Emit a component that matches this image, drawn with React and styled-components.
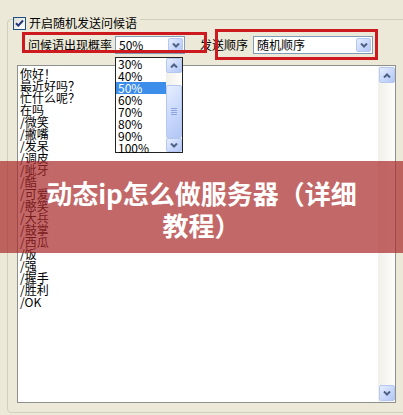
import React from 'react';
import styled, { createGlobalStyle } from 'styled-components';

const GREETINGS = [
  '你好！', '最近好吗？', '忙什么呢？', '在吗', '/微笑', '/撇嘴', '/发呆', '/调皮',
  '/呲牙', '/酷', '/可爱', '/憨笑', '/大兵', '/鼓掌', '/西瓜', '/饭', '/强', '/握手',
  '/胜利', '/OK',
];

const RATES = ['30%', '40%', '50%', '60%', '70%', '80%', '90%', '100%'];

const GlobalStyle = createGlobalStyle`
  body {
    margin: 0;
    background: #ece9d8;
    font-family: "Noto Sans CJK SC", "Noto Sans", sans-serif;
  }
`;

const Frame = styled.div`
  position: relative;
  width: 403px;
  height: 415px;
  overflow: hidden;
  box-sizing: border-box;
  padding: 19px 0 0 7px;
  font-size: 12px;
  color: #000;
`;

const Group = styled.div`
  width: 420px;
  height: 394px;
  box-sizing: border-box;
  border: 1px solid #d0d0bf;
  border-radius: 4px;
`;

const Legend = styled.div`
  display: flex;
  align-items: center;
  gap: 3px;
  width: fit-content;
  height: 14px;
  margin: -4px 0 0 5px;
  padding-right: 3px;
  background: #ece9d8;
  line-height: 14px;
`;

const CheckBox = styled.span`
  display: flex;
  align-items: center;
  justify-content: center;
  width: 13px;
  height: 13px;
  box-sizing: border-box;
  border: 1px solid #1c5180;
  background: linear-gradient(135deg, #dcdcd7, #fff);
`;

const Controls = styled.div`
  display: flex;
  align-items: center;
  margin: 6px 0 0 20px;
`;

const Label = styled.span`
  margin-left: ${(p) => p.ml || 0}px;
  line-height: 18px;
  white-space: nowrap;
`;

const Combo = styled.div`
  position: relative;
  display: flex;
  align-items: center;
  width: ${(p) => p.w}px;
  height: 18px;
  margin-left: ${(p) => p.ml}px;
  box-sizing: border-box;
  padding: 0 1px 0 3px;
  border: 1px solid #7f9db9;
  background: #fff;
`;

const ComboText = styled.span`
  flex: 1;
  line-height: 16px;
  white-space: nowrap;
`;

const XpButton = styled.span`
  display: flex;
  align-items: center;
  justify-content: center;
  flex: none;
  width: ${(p) => p.w}px;
  height: ${(p) => p.h}px;
  box-sizing: border-box;
  border: 1px solid #b5c8f2;
  border-radius: 2px;
  background: linear-gradient(135deg, #e6eefe 0%, #c8d7fb 55%, #b3c6f5 100%);
`;

const DropList = styled.div`
  position: absolute;
  top: 20px;
  left: -1px;
  z-index: 2;
  display: flex;
  width: 68px;
  height: 96px;
  box-sizing: border-box;
  border: 1px solid #222;
  background: #fff;
`;

const ListItems = styled.div`
  flex: 1;
`;

const ListItem = styled.div`
  height: 12px;
  padding-left: 2px;
  line-height: 12px;
  background: ${(p) => (p.selected ? '#3d8eea' : 'transparent')};
  color: ${(p) => (p.selected ? '#fff' : '#000')};
`;

const ScrollBar = styled.div`
  display: flex;
  flex-direction: column;
  width: ${(p) => p.w}px;
  box-sizing: border-box;
  padding: ${(p) => p.pad || 0}px;
  background: linear-gradient(to right, #f1f0ea, #fdfdfa);
`;

const Track = styled.div`
  flex: ${(p) => (p.h ? 'none' : 1)};
  height: ${(p) => p.h || 0}px;
`;

const Thumb = styled(XpButton)`
  flex-direction: column;
  gap: 1px;
`;

const Grip = styled.span`
  width: 6px;
  height: 1px;
  background: #8ca5e0;
`;

const TextArea = styled.div`
  display: flex;
  width: 379px;
  height: 338px;
  margin: 11px 0 0 9px;
  box-sizing: border-box;
  border: 1px solid #8e8f8f;
  background: #fff;
`;

const TextBody = styled.div`
  flex: 1;
  padding: 2px 0 0 2px;
  line-height: 12px;
  white-space: nowrap;
`;

const Marker = styled.div`
  position: absolute;
  left: ${(p) => p.x}px;
  top: ${(p) => p.y}px;
  width: ${(p) => p.w}px;
  height: ${(p) => p.h}px;
  box-sizing: border-box;
  border: 3px solid #cc1a1e;
  z-index: 3;
`;

const Banner = styled.div`
  position: absolute;
  left: 0;
  top: 161px;
  z-index: 5;
  display: flex;
  align-items: center;
  justify-content: center;
  width: 100%;
  height: 92px;
  box-sizing: border-box;
  padding: 4px 10px 0;
  background: rgba(170, 40, 40, 0.7);
  color: #fff;
  font: 700 26px/32px "Noto Sans CJK SC", "Noto Sans", sans-serif;
  text-align: center;
  white-space: nowrap;
`;

const Chevron = ({ dir }) => (
  <svg width="8" height="5" viewBox="0 0 8 5">
    <path
      d={dir === 'up' ? 'M1 4.5L4 1.5L7 4.5' : 'M1 0.5L4 3.5L7 0.5'}
      fill="none"
      stroke="#4d6185"
      strokeWidth="2"
    />
  </svg>
);

const App = () => (
  <Frame>
    <GlobalStyle />
    <Group>
      <Legend>
        <CheckBox>
          <svg width="9" height="9" viewBox="0 0 9 9">
            <path d="M1 4.2L3.3 6.6L8 1.5" fill="none" stroke="#21357a" strokeWidth="2" />
          </svg>
        </CheckBox>
        开启随机发送问候语
      </Legend>
      <Controls>
        <Label>问候语出现概率</Label>
        <Combo w={70} ml={3}>
          <ComboText>50%</ComboText>
          <XpButton w={15} h={14}><Chevron /></XpButton>
          <DropList>
            <ListItems>
              {RATES.map((r) => (
                <ListItem key={r} selected={r === '50%'}>{r}</ListItem>
              ))}
            </ListItems>
            <ScrollBar w={16}>
              <XpButton w={16} h={15}><Chevron dir="up" /></XpButton>
              <Track h={12} />
              <Thumb w={16} h={53}>
                <Grip /><Grip /><Grip /><Grip />
              </Thumb>
              <Track />
              <XpButton w={16} h={14}><Chevron /></XpButton>
            </ScrollBar>
          </DropList>
        </Combo>
        <Label ml={15}>发送顺序</Label>
        <Combo w={120} ml={5}>
          <ComboText>随机顺序</ComboText>
          <XpButton w={15} h={14}><Chevron /></XpButton>
        </Combo>
      </Controls>
      <TextArea>
        <TextBody>
          {GREETINGS.map((g) => <div key={g}>{g}</div>)}
        </TextBody>
        <ScrollBar w={17} pad={1}>
          <XpButton w={16} h={16}><Chevron dir="up" /></XpButton>
          <Track />
          <XpButton w={16} h={16}><Chevron /></XpButton>
        </ScrollBar>
      </TextArea>
    </Group>
    <Marker x={22} y={32} w={185} h={21} />
    <Marker x={215} y={29} w={163} h={31} />
    <Banner>
      <span>动态ip怎么做服务器（详细<br />教程）</span>
    </Banner>
  </Frame>
);

export default App;
